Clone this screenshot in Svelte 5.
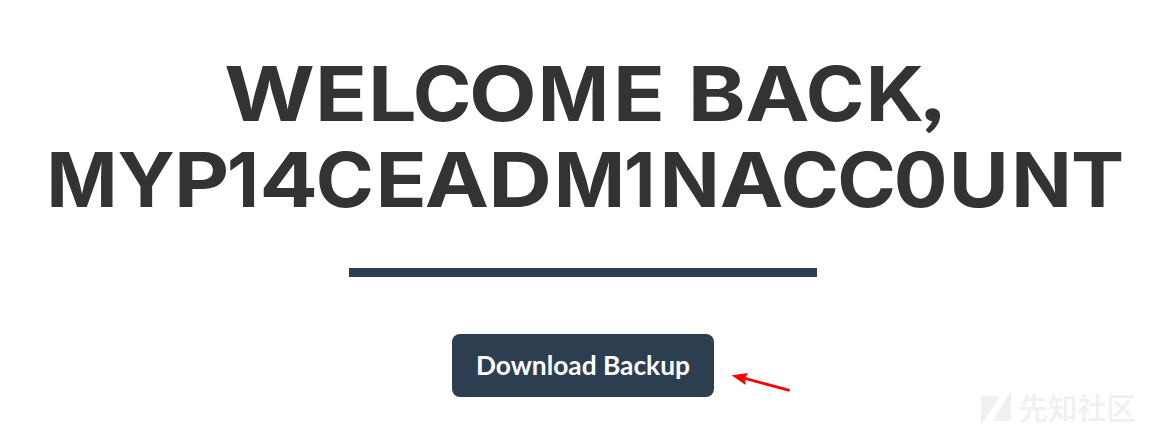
<script>
  // Each entry: character, left edge of the ink, right edge of the ink.
  const line1 = [
    ['W', 225.3, 313], ['E', 319.5, 362.5], ['L', 372.5, 413.5], ['C', 416, 468.5], ['O', 472.5, 533],
    ['M', 542, 604.5], ['E', 617.5, 660.5], [' ', 661, 692], ['B', 692.5, 743.5], ['A', 746.5, 808],
    ['C', 809, 861.5], ['K', 870, 922.5], [',', 925, 940.5]
  ];
  const line2 = [
    ['M', 50.5, 113], ['Y', 118.5, 173.5], ['P', 178.5, 227], ['1', 230, 254.5], ['4', 263, 314.5],
    ['C', 319, 371], ['E', 380, 422.5], ['A', 426, 487.5], ['D', 493, 549], ['M', 558, 620.5],
    ['1', 627, 651], ['N', 664, 715], ['A', 721, 782], ['C', 784, 836], ['C', 840.5, 893],
    ['0', 897, 944.5], ['U', 953, 1004], ['N', 1015.5, 1067], ['T', 1073, 1121.5]
  ];
  const ctx = document.createElement('canvas').getContext('2d');

  function fit([ch, left, right]) {
    const comma = ch === ',';
    if (ch === ' ') return { ch, comma, x: left, length: right - left };
    ctx.font = comma ? '900 84px Lato' : '700 75.6px Inter';
    const m = ctx.measureText(ch);
    const k = (right - left) / (m.actualBoundingBoxRight + m.actualBoundingBoxLeft);
    return { ch, comma, x: left + m.actualBoundingBoxLeft * k, length: m.width * k };
  }
  const rows = [
    { y: 121, glyphs: line1.map(fit) },
    { y: 207, glyphs: line2.map(fit) }
  ];
</script>

<main>
  <h1>
    <svg width="1152" height="240" viewBox="0 0 1152 240">
      {#each rows as row}
        <text y={row.y}>{#each row.glyphs as g}<tspan class:comma={g.comma} x={g.x} textLength={g.length} lengthAdjust="spacingAndGlyphs">{g.ch}</tspan>{/each}</text>
      {/each}
    </svg>
  </h1>
  <hr />
  <div class="action">
    <button>Download Backup</button>
    <svg class="arrow" width="62" height="24" viewBox="0 0 62 24">
      <path d="M12 6.2 56.5 18.2" stroke="#f00" stroke-width="2.8" stroke-linecap="round" />
      <path d="M-.5 3.2 16 1 12.8 6.5 13.6 13Z" fill="#f00" />
    </svg>
  </div>
  <div class="watermark">
    <svg width="30" height="37" viewBox="0 0 30 37">
      <path d="M0 6H19L0 36Z M30 0V31H12Z" fill="#f0f0f0" />
    </svg>
    <span>先知社区</span>
  </div>
</main>

<style>
  :global(body) { margin: 0; background: #fff; }
  main { position: relative; width: 1152px; height: 429px; overflow: hidden; background: #fff; }
  h1 { margin: 0; height: 240px; }
  h1 svg { display: block; }
  text { font: 700 75.6px Inter, sans-serif; fill: #333; white-space: pre; }
  .comma { font: 900 84px Lato, sans-serif; }
  hr { width: 468px; height: 9px; margin: 28px 0 0 349px; border: 0; background: #2c3e50; }
  .action { display: flex; align-items: flex-start; margin: 57px 0 0 452px; }
  button { width: 262px; height: 63px; padding: 0; border: 0; border-radius: 8px; background: #2c3e50; color: #fff; font: 700 26.3px/63px Lato, sans-serif; white-space: nowrap; }
  .arrow { margin: 38px 0 0 18px; }
  .watermark { position: absolute; left: 981px; top: 390px; display: flex; gap: 8px; color: #f0f0f0; font: 500 29.2px/33px "Noto Sans CJK SC", sans-serif; white-space: nowrap; }
</style>
